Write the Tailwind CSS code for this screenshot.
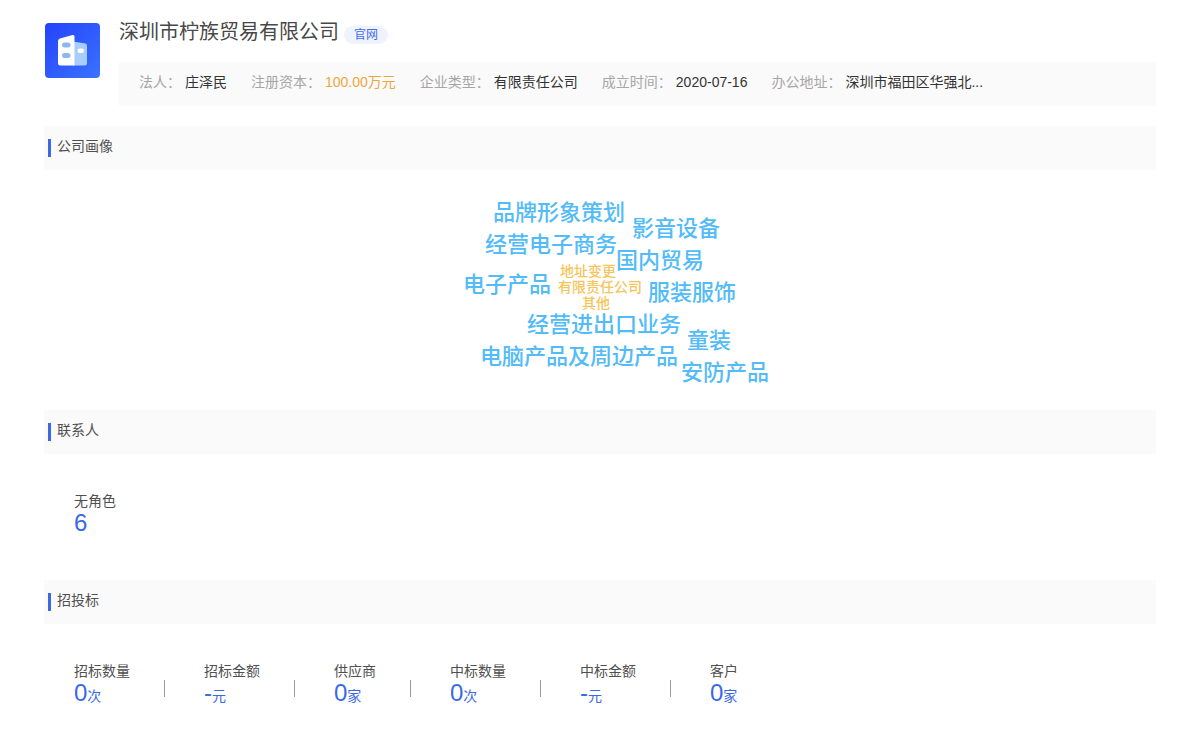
<!DOCTYPE html>
<html lang="zh-CN">
<head>
<meta charset="utf-8">
<meta name="viewport" content="width=device-width, initial-scale=1">
<title>深圳市柠族贸易有限公司</title>
<script src="https://cdn.jsdelivr.net/npm/@tailwindcss/browser@4"></script>
</head>
<body class="bg-white font-['Liberation_Sans','Noto_Sans_CJK_SC',sans-serif] text-sm text-[#505050]">
<main class="px-11 pb-10">
  <header class="flex gap-[19px] pt-4">
    <svg class="mt-[7px] ml-px size-[55px] shrink-0" viewBox="0 0 55 55" aria-hidden="true">
      <defs><linearGradient id="logo" x1="0" y1="0" x2="1" y2="1"><stop offset="0" stop-color="#2443fb"/><stop offset="1" stop-color="#3a72ff"/></linearGradient></defs>
      <rect width="55" height="55" rx="4" fill="url(#logo)"/>
      <path d="M28 18.500L40.500 20.500Q42 21 42 22.500V40.500Q42 42.500 40 42.500H28Z" fill="#a9cdfb"/>
      <path d="M15 15.500L27.500 12Q29.500 11.500 29.500 13.500V42.500H15.500Q13 42.500 13 40V18Q13 16 15 15.500Z" fill="#fff"/>
      <rect x="17" y="19.500" width="8.500" height="5" rx="2.500" fill="#8fb5f3"/>
      <rect x="17" y="30" width="8.500" height="5" rx="2.500" fill="#8fb5f3"/>
      <rect x="32.500" y="25.500" width="6.500" height="4.500" rx="2.200" fill="#fff"/>
    </svg>
    <div class="min-w-0 flex-1">
      <div class="flex items-center gap-[5px]">
        <h1 class="text-xl leading-8 text-[#484848]">深圳市柠族贸易有限公司</h1>
        <a href="#" class="mt-1.5 rounded-full bg-[#eff3fd] px-2.5 text-xs leading-[18px] text-[#3f6ce8]">官网</a>
      </div>
      <dl class="mt-3.5 flex min-h-11 flex-wrap items-center gap-x-6 bg-[#fafafa] px-5 pb-1 text-[#333]">
        <div class="flex gap-1"><dt class="text-[#a6a6a6]">法人：</dt><dd>庄泽民</dd></div>
        <div class="flex gap-1"><dt class="text-[#a6a6a6]">注册资本：</dt><dd class="text-[#eba73a]">100.00万元</dd></div>
        <div class="flex gap-1"><dt class="text-[#a6a6a6]">企业类型：</dt><dd>有限责任公司</dd></div>
        <div class="flex gap-1"><dt class="text-[#a6a6a6]">成立时间：</dt><dd>2020-07-16</dd></div>
        <div class="flex gap-1"><dt class="text-[#a6a6a6]">办公地址：</dt><dd>深圳市福田区华强北...</dd></div>
      </dl>
    </div>
  </header>

  <section class="mt-5">
    <div class="flex h-11 items-center gap-1.5 bg-[#fafafa] pl-1">
      <span class="h-[18px] w-[3px] bg-[#3a69e6]"></span>
      <h2 class="pb-1">公司画像</h2>
    </div>
    <div class="flex justify-center py-5">
      <!-- word cloud canvas -->
      <div class="relative h-[200px] w-80 text-[22px] leading-8 font-medium whitespace-nowrap text-[#52bbf8]">
        <span class="absolute top-[7px] left-[53px]">品牌形象策划</span>
        <span class="absolute top-[23px] left-[192px]">影音设备</span>
        <span class="absolute top-[39px] left-[45px]">经营电子商务</span>
        <span class="absolute top-[55px] left-[176px]">国内贸易</span>
        <span class="absolute top-[79px] left-[23px]">电子产品</span>
        <span class="absolute top-[87px] left-[208px]">服装服饰</span>
        <span class="absolute top-[119px] left-[87px]">经营进出口业务</span>
        <span class="absolute top-[135px] left-[247px]">童装</span>
        <span class="absolute top-[151px] left-[40px]">电脑产品及周边产品</span>
        <span class="absolute top-[167px] left-[241px]">安防产品</span>
        <span class="absolute top-[73px] left-[120px] text-sm leading-4 text-[#f6c55a]">地址变更</span>
        <span class="absolute top-[89px] left-[118px] text-sm leading-4 text-[#f6c55a]">有限责任公司</span>
        <span class="absolute top-[105px] left-[142px] text-sm leading-4 text-[#f6c55a]">其他</span>
      </div>
    </div>
  </section>

  <section>
    <div class="flex h-11 items-center gap-1.5 bg-[#fafafa] pl-1">
      <span class="h-[18px] w-[3px] bg-[#3a69e6]"></span>
      <h2 class="pb-1">联系人</h2>
    </div>
    <dl class="px-[30px] pt-[38px] pb-11">
      <div>
        <dt class="leading-[18px]">无角色</dt>
        <dd class="text-2xl leading-[26px] text-[#3a69e6]">6</dd>
      </div>
    </dl>
  </section>

  <section>
    <div class="flex h-11 items-center gap-1.5 bg-[#fafafa] pl-1">
      <span class="h-[18px] w-[3px] bg-[#3a69e6]"></span>
      <h2 class="pb-1">招投标</h2>
    </div>
    <dl class="flex flex-wrap px-[30px] pt-[38px] leading-[18px]">
      <div class="flex items-end gap-[34px] pr-[39px]"><div><dt>招标数量</dt><dd class="leading-[26px] text-[#3a69e6]"><span class="text-2xl leading-[26px]">0</span>次</dd></div><i class="mb-3 h-[17px] w-px bg-[#999]"></i></div>
      <div class="flex items-end gap-[34px] pr-[39px]"><div><dt>招标金额</dt><dd class="leading-[26px] text-[#3a69e6]"><span class="text-2xl leading-[26px]">-</span>元</dd></div><i class="mb-3 h-[17px] w-px bg-[#999]"></i></div>
      <div class="flex items-end gap-[34px] pr-[39px]"><div><dt>供应商</dt><dd class="leading-[26px] text-[#3a69e6]"><span class="text-2xl leading-[26px]">0</span>家</dd></div><i class="mb-3 h-[17px] w-px bg-[#999]"></i></div>
      <div class="flex items-end gap-[34px] pr-[39px]"><div><dt>中标数量</dt><dd class="leading-[26px] text-[#3a69e6]"><span class="text-2xl leading-[26px]">0</span>次</dd></div><i class="mb-3 h-[17px] w-px bg-[#999]"></i></div>
      <div class="flex items-end gap-[34px] pr-[39px]"><div><dt>中标金额</dt><dd class="leading-[26px] text-[#3a69e6]"><span class="text-2xl leading-[26px]">-</span>元</dd></div><i class="mb-3 h-[17px] w-px bg-[#999]"></i></div>
      <div><dt>客户</dt><dd class="leading-[26px] text-[#3a69e6]"><span class="text-2xl leading-[26px]">0</span>家</dd></div>
    </dl>
  </section>
</main>
</body>
</html>
